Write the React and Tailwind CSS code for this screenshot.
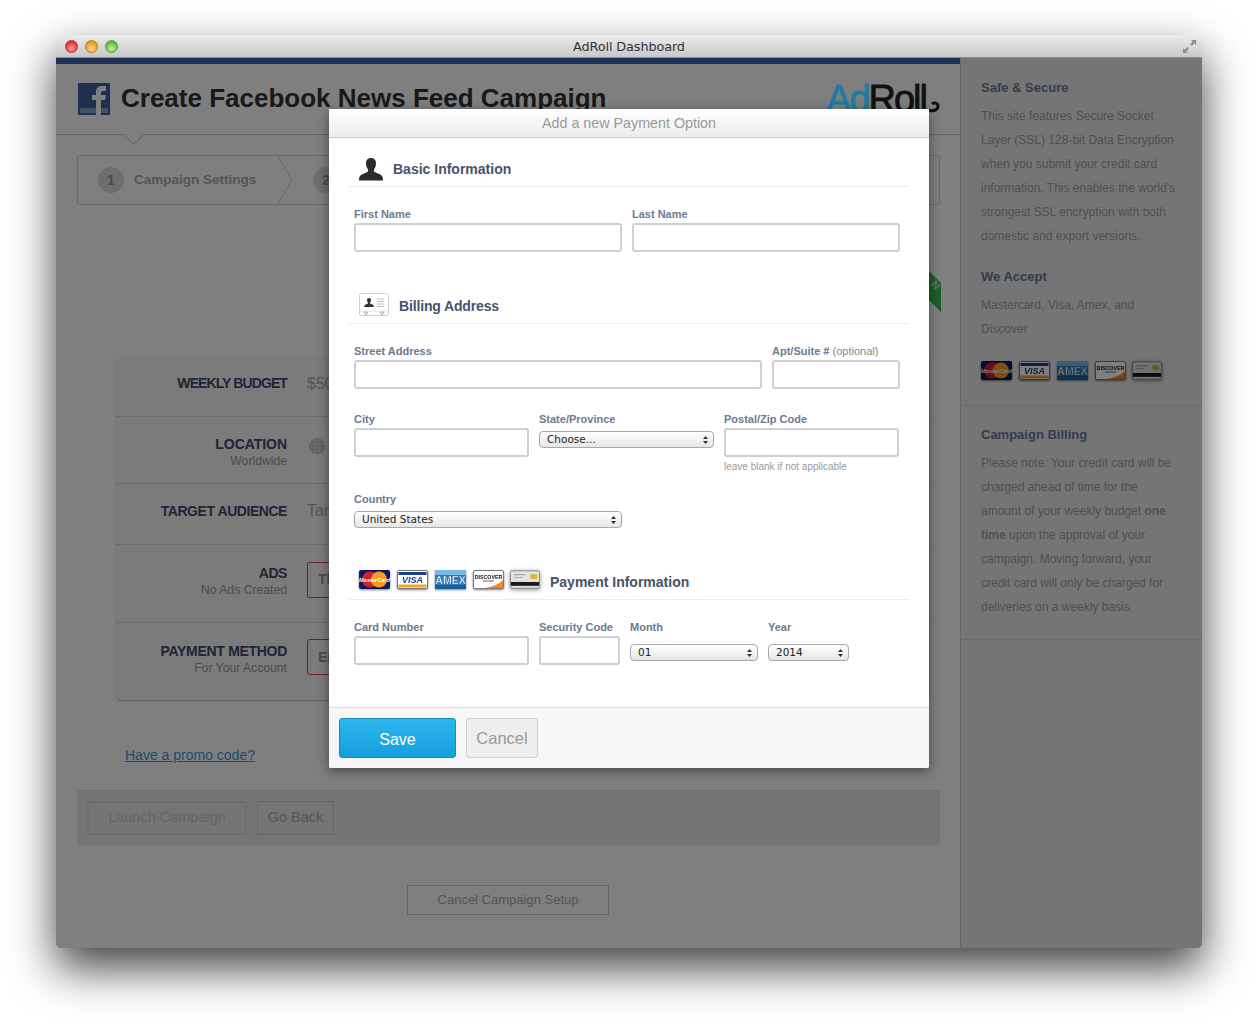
const helvetica = "font-['Liberation_Sans',Arial,sans-serif]";

function CardIcons({ className }) {
  return (
    <div className={`flex gap-[7px] ${className || ""}`}>
      {/* MasterCard */}
      <svg width="31" height="20" viewBox="0 0 31 20" className="drop-shadow-[0_1px_1px_rgba(0,0,0,0.5)]">
        <rect width="31" height="19" rx="2" fill="#0b1a5c" />
        <circle cx="11" cy="9.5" r="8" fill="#d0202c" />
        <circle cx="20" cy="9.5" r="8" fill="#f59e23" />
        <text x="15.5" y="11.5" textAnchor="middle" fontSize="5.6" fontStyle="italic" fontWeight="700" fill="#fff" fontFamily="Liberation Sans">MasterCard</text>
      </svg>
      {/* Visa */}
      <svg width="31" height="20" viewBox="0 0 31 20" className="drop-shadow-[0_1px_1px_rgba(0,0,0,0.5)]">
        <rect x="0.5" y="0.5" width="30" height="18" rx="1.5" fill="#fff" stroke="#777" />
        <rect x="1.5" y="2" width="28" height="3" fill="#1b3f8f" />
        <rect x="1.5" y="14.5" width="28" height="3" fill="#f0a52b" />
        <text x="15.5" y="13" textAnchor="middle" fontSize="9" fontStyle="italic" fontWeight="700" fill="#1b3f8f" fontFamily="Liberation Sans">VISA</text>
      </svg>
      {/* Amex */}
      <svg width="31" height="20" viewBox="0 0 31 20" className="drop-shadow-[0_1px_1px_rgba(0,0,0,0.5)]">
        <rect width="31" height="19" rx="1.5" fill="#2c7fbd" />
        <rect width="31" height="5" fill="#79b8e2" />
        <rect y="15" width="31" height="4" fill="#1a5f9c" />
        <text x="15.5" y="13.5" textAnchor="middle" fontSize="10.5" fontWeight="700" fill="#fff" stroke="#1a5a92" strokeWidth="0.35" fontFamily="Liberation Sans">AMEX</text>
      </svg>
      {/* Discover */}
      <svg width="31" height="20" viewBox="0 0 31 20" className="drop-shadow-[0_1px_1px_rgba(0,0,0,0.5)]">
        <rect x="0.5" y="0.5" width="30" height="18" rx="1.5" fill="#fff" stroke="#777" />
        <path d="M30 10 V18 H12 Q24 16 30 10 Z" fill="#ef8a2a" />
        <text x="15.5" y="8.5" textAnchor="middle" fontSize="5.3" fontWeight="700" fill="#111" fontFamily="Liberation Sans">DISCOVER</text>
        <rect x="10" y="10.5" width="11" height="1" fill="#666" />
      </svg>
      {/* Generic card */}
      <svg width="30" height="22" viewBox="0 0 31 22" className="-ml-[1px] drop-shadow-[0_1px_2px_rgba(0,0,0,0.45)]">
        <rect x="0.5" y="0.5" width="30" height="18" rx="1.5" fill="#e4e4e4" stroke="#888" />
        <rect x="21" y="4" width="7" height="5" fill="#d6b53a" />
        <rect x="4" y="4" width="12" height="1" fill="#999" />
        <rect x="4" y="7" width="9" height="1" fill="#aaa" />
        <rect x="1" y="12" width="29" height="4" fill="#1a1a1a" />
      </svg>
    </div>
  );
}

function PersonIcon() {
  return (
    <svg width="24" height="23" viewBox="0 0 24 23">
      <path
        d="M12 0c-3.4 0-5 2.4-5 5.4 0 2.2.8 4.5 2 5.8v2.3c-1.6 1.2-6.4 2.6-8 4.4-.7.8-1 2.6-1 4.6h24c0-2-.3-3.8-1-4.6-1.6-1.8-6.4-3.2-8-4.4v-2.3c1.2-1.3 2-3.6 2-5.8C17 2.4 15.4 0 12 0Z"
        fill="#2b2b2b"
      />
    </svg>
  );
}

function AddressIcon() {
  return (
    <svg width="30" height="24" viewBox="0 0 30 24">
      <rect x="0.5" y="0.5" width="29" height="22" rx="2" fill="#fff" stroke="#cfcfcf" />
      <path d="M10 5c-1.4 0-2 1-2 2.2 0 .9.4 1.8.9 2.3v1c-.8.5-2.9 1-3.4 1.8-.2.4-.3.9-.3 1.7h9.6c0-.8-.1-1.3-.3-1.7-.5-.8-2.6-1.3-3.4-1.8v-1c.5-.5.9-1.4.9-2.3C12 6 11.4 5 10 5Z" fill="#333" />
      <path d="M18 6h7M18 8.5h7M18 11h7M18 13.5h7" stroke="#bbb" strokeWidth="1" />
      <path d="M5 19h4l-2 3ZM21 19h4l-2 3Z" fill="none" stroke="#aaa" />
      <path d="M1 18h28" stroke="#e2e2e2" />
    </svg>
  );
}

function SectionHead({ icon, title, className, titleClass }) {
  return (
    <div className={`flex items-center border-b border-[#ececec] mx-[20px] ${className}`}>
      {icon}
      <span className={`text-[14px] font-bold text-[#46536a] ${titleClass || ""}`}>{title}</span>
    </div>
  );
}

function Field({ label, hint, className, children }) {
  return (
    <div className={className}>
      <div className="text-[11px] font-bold leading-[13px] h-[13px] text-[#6a7b92] whitespace-nowrap">
        {label}
        {hint && <span className="font-normal text-[#888]"> {hint}</span>}
      </div>
      {children}
    </div>
  );
}

function TextInput() {
  return (
    <input className="block w-full h-[29px] mt-[2px] bg-white border-2 border-[#cfcfcf] rounded-[3px] outline-none" />
  );
}

function Select({ value, options }) {
  return (
    <div className="relative">
      <select
        defaultValue={value}
        className="appearance-none block w-full h-[17px] pl-[7px] bg-gradient-to-b from-white to-[#e6e6e6] border border-[#a8a8a8] rounded-[4px] font-['DejaVu_Sans',sans-serif] text-[10.5px] leading-[15px] text-[#222] outline-none"
      >
        {options.map((o) => (
          <option key={o}>{o}</option>
        ))}
      </select>
      {/* up/down arrows of the native mac select */}
      <svg width="5" height="8" viewBox="0 0 5 8" className="absolute right-[6px] top-[5px] pointer-events-none">
        <path d="M2.5 0 5 3H0ZM2.5 8 0 5h5Z" fill="#333" />
      </svg>
    </div>
  );
}

function BudgetRow({ label, sub, children, className, labelClass }) {
  return (
    <div className={`flex items-center border-b border-dotted border-[#bbb] ${className}`}>
      <div className="w-[170px] text-right shrink-0">
        <div className={`text-[14px] leading-[17px] font-bold text-[#3e4c66] ${labelClass || "tracking-[-0.45px]"}`}>{label}</div>
        {sub && <div className="text-[12.2px] leading-[17px] text-[#999]">{sub}</div>}
      </div>
      <div className="ml-[20px] flex items-center whitespace-nowrap">{children}</div>
    </div>
  );
}

function SideText({ children, className }) {
  return <p className={`text-[12px] leading-[24px] text-[#a0a0a0] ${className || "mt-[8px]"}`}>{children}</p>;
}

function SideHead({ children }) {
  return <h3 className="text-[13px] leading-[16px] font-bold text-[#667a94]">{children}</h3>;
}

export default function App() {
  const months = ["01", "02", "03", "04", "05", "06", "07", "08", "09", "10", "11", "12"];
  return (
    <div className={`relative w-[1258px] h-[1026px] overflow-hidden bg-white pl-[56px] pt-[35px] ${helvetica}`}>
      <div className="relative w-[1146px] h-[913px] rounded-[4px] shadow-[0_20px_45px_rgba(0,0,0,0.75)] overflow-hidden flex flex-col">
        {/* title bar */}
        <div className="relative h-[23px] shrink-0 pt-[1px] flex items-center justify-center bg-gradient-to-b from-[#ececec] to-[#c8c8c8] border-b border-[#8c8c8c]">
          <div className="absolute left-[9px] top-[5px] flex gap-[7px]">
            <span className="w-[13px] h-[13px] rounded-full border border-[#a33] bg-[radial-gradient(circle_at_50%_70%,#ff9a94,#e0342c_70%)]" />
            <span className="w-[13px] h-[13px] rounded-full border border-[#b87a1a] bg-[radial-gradient(circle_at_50%_70%,#ffd98a,#e6961f_70%)]" />
            <span className="w-[13px] h-[13px] rounded-full border border-[#5a9a35] bg-[radial-gradient(circle_at_50%_70%,#c8f0a0,#62b83a_70%)]" />
          </div>
          <span className="font-['DejaVu_Sans',sans-serif] text-[12.8px] text-[#333] tracking-[-0.1px]">AdRoll Dashboard</span>
          <svg width="15" height="15" viewBox="0 0 15 15" className="absolute right-[5px] top-[4px]">
            <path d="M9 1h5v5l-1.7-1.7-2.6 2.6-1.6-1.6 2.6-2.6ZM1 9v5h5l-1.7-1.7 2.6-2.6-1.6-1.6-2.6 2.6Z" fill="#8d8d8d" />
          </svg>
        </div>

        <div className="relative flex flex-1 bg-white">
          {/* main column */}
          <div className="w-[904px] shrink-0">
            <div className="h-[6px] bg-[#3e60b0]" />
            <header className="relative h-[71px] border-b border-[#ccc] flex items-start pl-[22px] pr-[20px] pt-[19px]">
              <svg width="32" height="32" viewBox="0 0 32 32" className="shrink-0">
                <rect width="32" height="32" rx="1" fill="#3f5f9f" />
                <rect x="2" y="25" width="28" height="5" fill="#8aa0c8" />
                <path d="M18 32V17h-4v-5h4V9c0-4 2.4-6 6-6h4v5h-3c-1.4 0-2 .7-2 2v2h5l-1 5h-4v15Z" fill="#fff" />
              </svg>
              <h1 className="ml-[11px] text-[26px] leading-[30px] font-bold text-[#333] whitespace-nowrap">
                Create Facebook News Feed Campaign
              </h1>
              <div className="relative z-10 ml-auto flex items-start text-[38px] leading-[32px] tracking-[-2px] text-[#111] [-webkit-text-stroke:0.8px_currentColor]">
                <span className="text-[#1f7ba3]">Ad</span>
                <span>Roll</span>
                <svg width="14" height="24" viewBox="0 0 14 24" className="mt-[8px]">
                  <path d="M1 19c6 2 11 0 11-4 0-3-4-4-6-2" fill="none" stroke="#111" strokeWidth="3" />
                </svg>
              </div>
              <span className="absolute left-[70px] -bottom-[6px] w-[15px] h-[15px] rotate-45 bg-white border-r border-b border-[#ccc] translate-y-[2px]" />
            </header>

            {/* steps */}
            <div className="mt-[20px] ml-[21px] mr-[20px] h-[50px] border border-[#d0d0d0] rounded-[3px] flex items-center overflow-hidden">
              <span className="ml-[20px] w-[26px] h-[26px] rounded-full bg-[#ddd] flex items-center justify-center text-[14px] font-bold text-[#999]">1</span>
              <span className="ml-[10px] pt-[1px] text-[13.5px] font-bold text-[#aaa]">Campaign Settings</span>
              <svg width="16" height="50" viewBox="0 0 16 50" className="ml-[21px]">
                <path d="M0 0 15 25 0 50" fill="none" stroke="#d0d0d0" />
              </svg>
              <span className="ml-[20px] w-[26px] h-[26px] rounded-full bg-[#ddd] flex items-center justify-center text-[14px] font-bold text-[#999]">2</span>
            </div>

            {/* campaign form behind the modal */}
            <section className="mt-[152px] ml-[61px] w-[813px] bg-[#f6f6f6] rounded-[4px] shadow-[0_1px_2px_rgba(0,0,0,0.3)]">
              <BudgetRow label="WEEKLY BUDGET" labelClass="tracking-[-0.9px]" className="h-[60px] pb-[6px]">
                <span className="text-[16px] text-[#aaa]">$50</span>
              </BudgetRow>
              <BudgetRow label="LOCATION" labelClass="tracking-[-0.05px]" sub="Worldwide" className="h-[67px] pt-[6px]">
                <svg width="16" height="16" viewBox="0 0 16 16" fill="none" stroke="#bbb" className="ml-[2px] mb-[14px]">
                  <circle cx="8" cy="8" r="7.5" fill="#ddd" />
                  <path d="M.5 8h15M2 4.5h12M2 11.5h12M8 .5v15M4.5 1.5c-1.5 4-1.5 9 0 13M11.5 1.5c1.5 4 1.5 9 0 13" />
                </svg>
              </BudgetRow>
              <BudgetRow label="TARGET AUDIENCE" className="h-[61px] pb-[6px]">
                <span className="text-[16px] text-[#aaa]">Target</span>
              </BudgetRow>
              <BudgetRow label="ADS" sub="No Ads Created" className="h-[78px] pb-[3px]">
                <span className="h-[36px] mb-[5px] px-[10px] flex items-center border border-[#e04040] rounded-[3px] text-[14px] font-bold text-[#999]">The</span>
              </BudgetRow>
              <BudgetRow label="PAYMENT METHOD" labelClass="tracking-[-0.3px]" sub="For Your Account" className="h-[77px] pb-[3px] border-b-0">
                <span className="h-[36px] mb-[6px] px-[10px] flex items-center border border-[#e04040] rounded-[3px] text-[14px] font-bold text-[#999]">Enter</span>
              </BudgetRow>
            </section>

            <a className="block mt-[46px] ml-[69px] text-[14px] leading-[18px] underline text-[#3a9ae0]">Have a promo code?</a>

            <div className="mt-[26px] ml-[21px] mr-[20px] h-[55px] bg-[#ebebeb] border-t border-[#ddd] flex items-center gap-[10px] px-[10px]">
              <button className="w-[160px] h-[34px] border-2 border-[#ddd] text-[14.5px] text-[#c8c8c8]">Launch Campaign</button>
              <button className="w-[77px] h-[34px] border border-[#ccc] text-[14.5px] text-[#aaa]">Go Back</button>
            </div>

            <div className="mt-[40px] flex justify-center">
              <button className="w-[202px] h-[30px] border border-[#ccc] text-[13px] text-[#aaa]">Cancel Campaign Setup</button>
            </div>
          </div>

          {/* sidebar */}
          <aside className="flex-1 bg-[#ebebeb] border-l border-[#ccc]">
            <div className="px-[20px] pt-[22px] h-[348px] border-b border-[#d8d8d8]">
              <SideHead>Safe &amp; Secure</SideHead>
              <SideText>
                This site features Secure Socket Layer (SSL) 128-bit Data Encryption when you submit your credit card information. This enables the world's strongest SSL encryption with both domestic and export versions.
              </SideText>
              <div className="mt-[21px]">
                <SideHead>We Accept</SideHead>
              </div>
              <SideText>Mastercard, Visa, Amex, and Discover</SideText>
              <CardIcons className="mt-[20px]" />
            </div>
            <div className="pl-[20px] pr-[28px] pt-[21px] h-[234px] border-b border-[#d8d8d8]">
              <SideHead>Campaign Billing</SideHead>
              <SideText>
                Please note: Your credit card will be charged ahead of time for the amount of your weekly budget <b>one time</b> upon the approval of your campaign. Moving forward, your credit card will only be charged for deliveries on a weekly basis.
              </SideText>
            </div>
          </aside>

          {/* green ribbon corner */}
          <svg width="14" height="44" viewBox="0 0 14 44" className="absolute left-[872px] top-[212px]">
            <path d="M0 0 13 13V42L0 29Z" fill="#34c04a" />
            <text x="0" y="0" transform="translate(2 15) rotate(45)" fontSize="11" fontWeight="700" fill="#ddd" fontFamily="Liberation Sans">N</text>
          </svg>

          <div className="absolute inset-0 bg-black/50" />

          {/* modal */}
          <div className="absolute z-20 left-[273px] top-[51px] w-[600px] h-[659px] bg-white rounded-[2px] shadow-[0_3px_12px_rgba(0,0,0,0.45)] flex flex-col">
            <div className="h-[29px] shrink-0 pt-[2px] bg-gradient-to-b from-white to-[#ededed] border-b border-[#c9c9c9] flex items-center justify-center text-[14.3px] text-[#999]">
              Add a new Payment Option
            </div>

            <SectionHead
              className="h-[49px] pl-[10px] gap-[10px] pt-[15px]"
              icon={<PersonIcon />}
              title="Basic Information"
            />
            <div className="mx-[25px] mt-[21px] flex gap-[10px]">
              <Field label="First Name" className="w-[268px]"><TextInput /></Field>
              <Field label="Last Name" className="w-[268px]"><TextInput /></Field>
            </div>

            <SectionHead
              className="mt-[34px] h-[38px] pl-[10px] gap-[10px]"
              icon={<AddressIcon />}
              title="Billing Address"
              titleClass="pt-[4px] tracking-[-0.15px]"
            />
            <div className="mx-[25px] mt-[21px] flex gap-[10px]">
              <Field label="Street Address" className="w-[408px]"><TextInput /></Field>
              <Field label="Apt/Suite #" hint="(optional)" className="w-[128px]"><TextInput /></Field>
            </div>
            <div className="mx-[25px] mt-[24px] flex gap-[10px]">
              <Field label="City" className="w-[175px]"><TextInput /></Field>
              <Field label="State/Province" className="w-[175px]">
                <div className="mt-[5px]"><Select value="Choose..." options={["Choose..."]} /></div>
              </Field>
              <Field label="Postal/Zip Code" className="w-[175px]">
                <TextInput />
                <div className="mt-[4px] text-[10px] leading-[12px] text-[#999]">leave blank if not applicable</div>
              </Field>
            </div>
            <Field label="Country" className="mx-[25px] mt-[20px] w-[268px]">
              <div className="mt-[5px]"><Select value="United States" options={["United States"]} /></div>
            </Field>

            <SectionHead
              className="mt-[35px] h-[37px] pl-[10px] gap-[10px]"
              icon={<CardIcons />}
              title="Payment Information"
              titleClass="pt-[2px]"
            />
            <div className="mx-[25px] mt-[21px] flex">
              <Field label="Card Number" className="w-[175px]"><TextInput /></Field>
              <Field label="Security Code" className="ml-[10px] w-[81px]"><TextInput /></Field>
              <Field label="Month" className="ml-[10px] w-[128px]">
                <div className="mt-[3px] pt-[7px]"><Select value="01" options={months} /></div>
              </Field>
              <Field label="Year" className="ml-[10px] w-[81px]">
                <div className="mt-[3px] pt-[7px]"><Select value="2014" options={["2014", "2015", "2016"]} /></div>
              </Field>
            </div>

            <div className="mt-auto h-[61px] bg-[#f7f7f7] border-t border-[#dedede] flex items-start gap-[10px] pl-[10px] pt-[10px] rounded-b-[2px]">
              <button className="w-[117px] h-[40px] rounded-[3px] bg-gradient-to-b from-[#2fb6f0] to-[#119fdc] border border-[#0f8fc6] text-[16px] pt-[3px] text-white">Save</button>
              <button className="w-[72px] h-[40px] pt-[1px] rounded-[3px] bg-[#eeeeee] border border-[#cfcfcf] text-[16.5px] text-[#999]">Cancel</button>
            </div>
          </div>
        </div>
      </div>
    </div>
  );
}
